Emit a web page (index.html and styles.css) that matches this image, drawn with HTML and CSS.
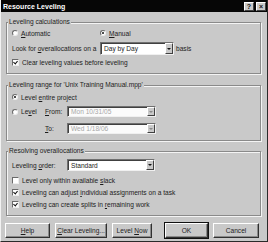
FILE: index.html
```html
<!DOCTYPE html>
<html lang="en">
<head>
    <meta charset="UTF-8">
    <title>Resource Leveling</title>
    <link rel="stylesheet" href="styles.css">
</head>
<body>
    <div class="window">
        <div class="titlebar">
            <span class="title">Resource Leveling</span>
            <span class="tb-buttons">
                <span class="tb-btn">?</span>
                <span class="tb-btn">&#215;</span>
            </span>
        </div>

        <div class="body">
            <fieldset class="group g1">
                <legend>Leveling calculations</legend>
                <div class="row r1">
                    <label class="opt col-a"><span class="radio"></span><span><u>A</u>utomatic</span></label>
                    <label class="opt"><span class="radio on"></span><span><u>M</u>anual</span></label>
                </div>
                <div class="row r2">
                    <span class="col-a">Look for <u>o</u>verallocations on a</span>
                    <span class="select w-basis"><span class="val">Day by Day</span><span class="drop"></span></span>
                    <span class="after">basis</span>
                </div>
                <div class="row r3">
                    <label class="opt"><span class="check on"></span><span>Clear leveling values before leveling</span></label>
                </div>
            </fieldset>

            <fieldset class="group g2">
                <legend>Leveling range for 'Unix Training Manual.mpp'</legend>
                <div class="row r1">
                    <label class="opt"><span class="radio on"></span><span>Level <u>e</u>ntire project</span></label>
                </div>
                <div class="row r2">
                    <label class="opt col-b"><span class="radio"></span><span>Le<u>v</u>el</span></label>
                    <span class="col-c"><u>F</u>rom:</span>
                    <span class="select disabled w-date"><span class="val">Mon 10/31/05</span><span class="drop"></span></span>
                </div>
                <div class="row r3">
                    <span class="col-b"></span>
                    <span class="col-c"><u>T</u>o:</span>
                    <span class="select disabled w-date"><span class="val">Wed 1/18/06</span><span class="drop"></span></span>
                </div>
            </fieldset>

            <fieldset class="group g3">
                <legend>Resolving overallocations</legend>
                <div class="row r1">
                    <span class="col-d">Leveling <u>o</u>rder:</span>
                    <span class="select w-order"><span class="val">Standard</span><span class="drop"></span></span>
                </div>
                <div class="row cb">
                    <label class="opt"><span class="check"></span><span>Level only within available <u>s</u>lack</span></label>
                </div>
                <div class="row cb">
                    <label class="opt"><span class="check on"></span><span>Leveling can adjust <u>i</u>ndividual assignments on a task</span></label>
                </div>
                <div class="row cb">
                    <label class="opt"><span class="check on"></span><span>Leveling can create splits in <u>r</u>emaining work</span></label>
                </div>
            </fieldset>

            <div class="buttons">
                <button class="btn b-help"><u>H</u>elp</button>
                <button class="btn b-clear"><u>C</u>lear Leveling...</button>
                <button class="btn b-now">Level <u>N</u>ow</button>
                <button class="btn b-ok default">OK</button>
                <button class="btn b-cancel">Cancel</button>
            </div>
        </div>
    </div>
</body>
</html>
```

FILE: styles.css
```css
body {
    margin: 0;
    font-family: "Liberation Sans", Arial, sans-serif;
    font-size: 6.6px;
    color: #1c1c1c;
    background-color: #c9c9c9;
}

.window {
    width: 268px;
    height: 242px;
    box-sizing: border-box;
    background-color: #c9c9c9;
    border-left: 1px solid #f2f2f2;
    border-right: 1px solid #2a2a2a;
    border-bottom: 1px solid #2a2a2a;
    overflow: hidden;
}

.titlebar {
    height: 12px;
    margin-left: -1px;
    background-color: #060606;
    display: flex;
    align-items: center;
    padding: 0 1px 0 3px;
}

.title {
    color: #fff;
    font-weight: bold;
    font-size: 7px;
}

.tb-buttons {
    margin-left: auto;
    display: flex;
    gap: 2px;
}

.tb-btn {
    width: 10px;
    height: 9px;
    box-sizing: border-box;
    background-color: #c9c9c9;
    border-top: 1px solid #fff;
    border-left: 1px solid #fff;
    border-right: 1px solid #404040;
    border-bottom: 1px solid #404040;
    font-size: 7px;
    font-weight: bold;
    line-height: 7px;
    text-align: center;
    color: #111;
}

.body {
    padding: 6px 6px 0 5px;
}

.group {
    margin: 0;
    padding: 0 5px;
    width: 255px;
    min-width: 0;
    box-sizing: border-box;
    border: 1px solid #8a8a8a;
    box-shadow: inset 1px 1px 0 #f4f4f4, 1px 1px 0 #f4f4f4;
}

.group legend {
    padding: 0 1px;
    margin-left: -4px;
    line-height: 8px;
    background-color: #c9c9c9;
}

.row {
    display: flex;
    align-items: center;
    white-space: nowrap;
}

.g1 { padding-bottom: 6px; }
.g1 .r1 { height: 10px; margin-top: 2px; }
.g1 .r2 { height: 13px; margin-top: 4px; }
.g1 .r3 { height: 10px; margin-top: 2px; }

.g2 { margin-top: 7px; padding-bottom: 6px; }
.g2 .r1 { height: 10px; margin-top: 3px; }
.g2 .r2 { height: 11px; margin-top: 4px; }
.g2 .r3 { height: 11px; margin-top: 6px; }

.g3 { margin-top: 6px; padding-bottom: 5px; }
.g3 .r1 { height: 12px; margin-top: 4px; }
.g3 .cb { height: 12px; }
.g3 .r1 + .cb { margin-top: 3px; }

.col-a { width: 88px; flex: none; }
.col-b { width: 33px; flex: none; }
.col-c { width: 22px; flex: none; }
.col-d { width: 55px; flex: none; }

.opt {
    display: flex;
    align-items: center;
}

.radio {
    width: 6px;
    height: 6px;
    box-sizing: border-box;
    border-radius: 50%;
    background-color: #fff;
    border: 1px solid;
    border-color: #6a6a6a #eee #eee #6a6a6a;
    margin-right: 3px;
    position: relative;
    flex: none;
}

.radio.on::after {
    content: "";
    position: absolute;
    left: 1px;
    top: 1px;
    width: 2px;
    height: 2px;
    border-radius: 50%;
    background-color: #111;
}

.check {
    width: 7px;
    height: 7px;
    box-sizing: border-box;
    background-color: #fff;
    border: 1px solid;
    border-color: #6a6a6a #eee #eee #6a6a6a;
    margin-right: 3px;
    position: relative;
    flex: none;
}

.check.on::after {
    content: "";
    position: absolute;
    left: 1px;
    top: 0px;
    width: 2px;
    height: 3px;
    border-right: 1px solid #111;
    border-bottom: 1px solid #111;
    transform: rotate(40deg);
}

.select {
    display: flex;
    align-items: center;
    box-sizing: border-box;
    height: 100%;
    background-color: #fff;
    border: 1px solid;
    border-color: #707070 #f0f0f0 #f0f0f0 #707070;
    box-shadow: inset 1px 1px 0 #404040;
    flex: none;
}

.select .val {
    flex: 1;
    padding-left: 3px;
}

.select .drop {
    width: 8px;
    height: 100%;
    box-sizing: border-box;
    background-color: #c9c9c9;
    border-top: 1px solid #fff;
    border-left: 1px solid #fff;
    border-right: 1px solid #404040;
    border-bottom: 1px solid #404040;
    display: flex;
    align-items: center;
    justify-content: center;
}

.select .drop::after {
    content: "";
    border-left: 2px solid transparent;
    border-right: 2px solid transparent;
    border-top: 2px solid #111;
}

.select.disabled {
    background-color: #fbfbfb;
    color: #a8a8a8;
}

.select.disabled .drop::after {
    border-top-color: #8a8a8a;
}

.w-basis { width: 74px; }
.w-date { width: 89px; }
.w-order { width: 88px; }

.after {
    margin-left: 2px;
}

.buttons {
    display: flex;
    margin-top: 7px;
    margin-left: -1px;
}

.btn {
    height: 15px;
    box-sizing: border-box;
    padding: 0;
    font: inherit;
    color: inherit;
    background-color: #c9c9c9;
    border-top: 1px solid #fff;
    border-left: 1px solid #fff;
    border-right: 1px solid #303030;
    border-bottom: 1px solid #303030;
    box-shadow: inset -1px -1px 0 #8a8a8a;
}

.btn.default {
    outline: 1px solid #111;
    outline-offset: 0;
}

.b-help { width: 45px; }
.b-clear { width: 52px; margin-left: 5px; }
.b-now { width: 40px; margin-left: 5px; }
.b-ok { width: 43px; margin-left: 13px; }
.b-cancel { width: 46px; margin-left: 5px; }
```
